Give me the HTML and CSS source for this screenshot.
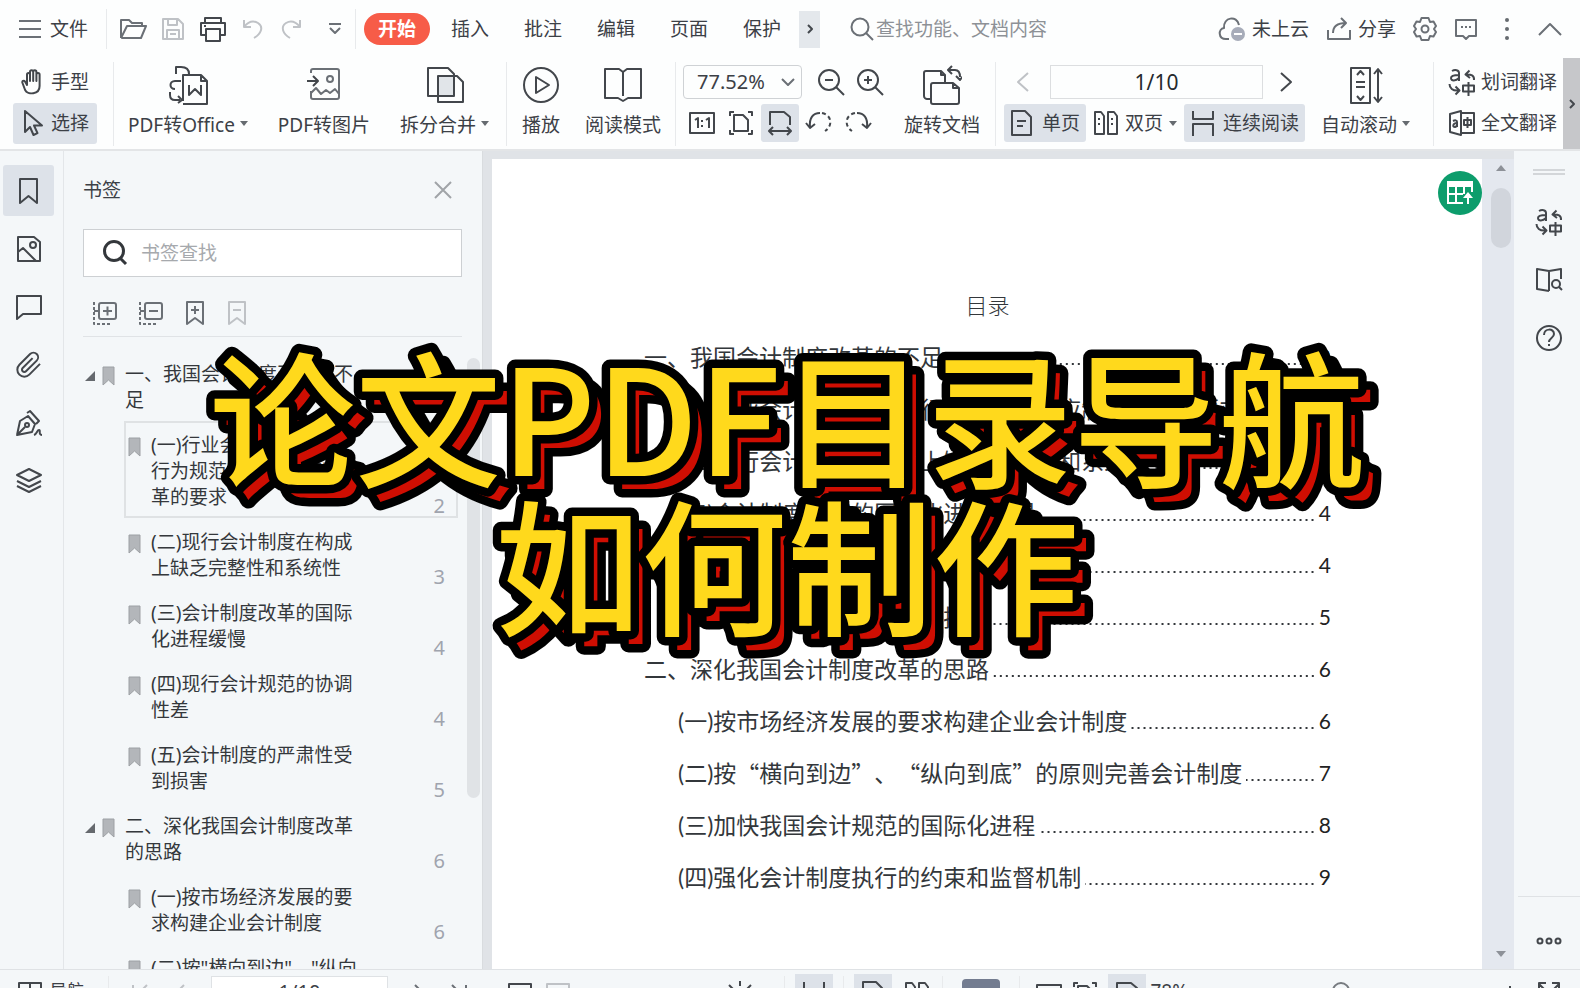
FILE: index.html
```html
<!DOCTYPE html>
<html lang="zh-CN">
<head>
<meta charset="utf-8">
<title>论文PDF目录导航如何制作</title>
<link rel="stylesheet" href="styles.css">
</head>
<body>
<svg class="sprite" aria-hidden="true">
  <symbol id="flag" viewBox="0 0 13 20"><path d="M1 1h11v18l-5.500-5L1 19z" fill="#b3b6ba" stroke="#9da0a4"/></symbol>
  <symbol id="caret" viewBox="0 0 8 5"><path d="M0 0h8L4 5z" fill="#666b70"/></symbol>
  <symbol id="translate" viewBox="0 0 28 28"><path d="M4 3c3-1.800 7-1 7 2V13M11 7C6 7 3 7.500 3 10c0 3.500 5 3 8 0M26 12c.5-4.500-3-6-8-5.500M21.500 2.500 17.500 6.500l4.500 3.500M1.500 16c0 4 3 7 9 6.500M7.500 18.500l4 4-4 4M15 17.500h11v6H15zM20.500 14V28"/></symbol>
  <symbol id="onepage" viewBox="0 0 24 28"><path d="M2 2h13l6 6v18H2zM7 12h9M7 17h6"/></symbol>
  <symbol id="twopage" viewBox="0 0 26 28"><path d="M2 3h6l3 4v18H2zM15 3h6l3 4v18h-9zM5 10h2M5 15h2M18 10h2M18 15h2"/></symbol>
  <symbol id="continuous" viewBox="0 0 26 28"><path d="M3 2v8h20V2M3 27V15h20v12"/></symbol>
  <symbol id="fitpage" viewBox="0 0 26 26"><path d="M2 6V2h4M20 2h4v4M24 20v4h-4M6 24H2v-4M6 5h9l5 5v11H6z"/></symbol>
  <symbol id="fitwidth" viewBox="0 0 26 26"><path d="M3 15V2h14l6 5v8M2 21h22M6 17l-4 4 4 4M20 17l4 4-4 4"/></symbol>
</svg>
<div class="app">
  <header>
    <div class="menubar">
      <button class="tool file"><svg class="ic" width="24" height="24" viewBox="0 0 24 24"><path d="M1 4h22M1 12h22M1 20h22"/></svg>文件</button>
      <span class="sep"></span>
      <div class="quick">
        <button aria-label="打开"><svg class="ic" width="28" height="24" viewBox="0 0 28 24"><path d="M2 21V3h8l3 3h10v4M2 21h20l5-12H8L2 21"/></svg></button>
        <button aria-label="保存"><svg class="ic faint" width="24" height="24" viewBox="0 0 24 24"><path d="M2 2h15l5 5v15H2zM7 2v6h9V2M6 22v-9h12v9M9 17h6"/></svg></button>
        <button aria-label="打印"><svg class="ic dark" width="28" height="28" viewBox="0 0 28 28"><path d="M6 8V3h16v5M7 20H2V8h24v12h-5M7 14h14v12H7zM5 11h2"/></svg></button>
        <button aria-label="撤销"><svg class="ic faint" width="24" height="24" viewBox="0 0 24 24"><path d="M3 3v7h7M3 10c4-5 9-7 14-4 6 4 3 11-4 15"/></svg></button>
        <button aria-label="重做"><svg class="ic faint" width="24" height="24" viewBox="0 0 24 24"><path d="M21 3v7h-7M21 10C17 5 12 3 7 6c-6 4-3 11 4 15"/></svg></button>
        <button aria-label="更多"><svg class="ic" width="16" height="16" viewBox="0 0 16 16"><path d="M2 3h12M3 7l5 5 5-5"/></svg></button>
      </div>
      <span class="sep"></span>
      <nav class="tabs">
        <a class="active" href="#start">开始</a><a href="#insert">插入</a><a href="#annotate">批注</a><a href="#edit">编辑</a><a href="#page">页面</a><a href="#protect">保护</a>
      </nav>
      <button class="more" aria-label="更多选项卡"><svg class="ic dark" width="8" height="10" viewBox="0 0 8 10"><path d="M2 1l4 4-4 4"/></svg></button>
      <label class="search"><svg class="ic" width="24" height="24" viewBox="0 0 24 24"><circle cx="10" cy="10" r="8.500"/><path d="M16 16l7 7"/></svg><input type="text" placeholder="查找功能、文档内容"></label>
      <div class="account">
        <button class="tool"><svg class="ic" width="28" height="26" viewBox="0 0 28 26"><path d="M11 23H8c-8 0-8-10-2-11C5 1 19-1 21 9"/><circle cx="20" cy="18" r="7" fill="#a7acb9" stroke="none"/><path d="M16 18h8" stroke="#fff"/></svg>未上云</button>
        <button class="tool"><svg class="ic" width="26" height="24" viewBox="0 0 26 24"><path d="M2 13v9h22v-9M7 16c0-6 4-10 13-10M15 1l5 5-5 5"/></svg>分享</button>
        <button aria-label="设置"><svg class="ic" width="24" height="26" viewBox="0 0 24 26"><path d="M8.500 2h7l1.500 4 3.500-.5L23 10l-2 3 2 3-2.500 4.500L17 20l-1.500 4h-7L7 20l-3.500.5L1 16l2-3-2-3 2.500-4.500L7 6z"/><circle cx="12" cy="13" r="3.500"/></svg></button>
        <button aria-label="反馈"><svg class="ic" width="24" height="24" viewBox="0 0 24 24"><path d="M2 3h20v16h-7l-3 3-3-3H2zM7 10h2M11 10h2M15 10h2"/></svg></button>
        <button aria-label="菜单"><svg width="24" height="24" viewBox="0 0 24 24" fill="#666b70"><circle cx="12" cy="3" r="2"/><circle cx="12" cy="12" r="2"/><circle cx="12" cy="21" r="2"/></svg></button>
        <button aria-label="收起功能区"><svg class="ic" width="24" height="14" viewBox="0 0 24 14"><path d="M1 13L12 2l11 11"/></svg></button>
      </div>
    </div>

    <div class="ribbon">
      <div class="group modes">
        <button class="tool"><svg class="ic dark" width="24" height="28" viewBox="0 0 24 28"><path d="M6 17V6.500c0-2 3-2 3 0V13 4c0-2.200 3.200-2.200 3.200 0v9V4c0-2.200 3.200-2.200 3.200 0v9V6.500c0-2 3.200-2 3.200 0V18c0 9-12 9-14.500 4L1.500 15c-1-2 1.500-3 2.500-1.500z"/></svg>手型</button>
        <button class="tool on"><svg class="ic dark" width="24" height="28" viewBox="0 0 24 28"><path d="M4 2v21l5-5 3.500 8 4-1.800L13 16.500h8z"/></svg>选择</button>
      </div>
      <span class="sep"></span>
      <div class="group convert">
        <button class="big"><svg class="ic dark" width="40" height="40" viewBox="0 0 40 40"><path d="M8 9V2h5c6 0 8 3 8 7M13 16H7c-6 0-6 8 0 8M2 27v3c0 4 2 5 5 5h5M10 31l4 4-4 3M15 36V10h18l6 6v23H15M33 10v6h6"/><path d="M21 20v10l6-6 6 6V20"/></svg><span>PDF转Office <svg class="caret"><use href="#caret"/></svg></span></button>
        <button class="big"><svg class="ic" width="40" height="40" viewBox="0 0 40 40"><path d="M7 8V6c0-1 1-2 2-2h24c1 0 2 1 2 2v26c0 1-1 2-2 2H9c-1 0-2-1-2-2v-6M7 28l5-5 5 6 5-4 4 3 5-4 4 5"/><path class="dark" d="M3 16h11M9 11l5 5-5 5"/><circle cx="26" cy="14" r="3"/></svg><span>PDF转图片</span></button>
        <button class="big"><svg class="ic dark" width="40" height="40" viewBox="0 0 40 40"><path d="M13 11h16v20H13z" fill="#e1e5e9" stroke="none"/><path d="M3 3h20l6 6v22H3zM13 11h19l6 6v20H13z"/></svg><span>拆分合并 <svg class="caret"><use href="#caret"/></svg></span></button>
      </div>
      <span class="sep"></span>
      <div class="group view">
        <button class="big"><svg class="ic dark" width="40" height="40" viewBox="0 0 40 40"><circle cx="20" cy="20" r="17"/><path d="M15 12v16l13-8z"/></svg><span>播放</span></button>
        <button class="big"><svg class="ic dark" width="40" height="40" viewBox="0 0 40 40"><path d="M2 4h14l4 3 4-3h14v29H25l-5 3-5-3H2zM20 7v24"/></svg><span>阅读模式</span></button>
      </div>
      <span class="sep"></span>
      <div class="group zoom">
        <div class="row">
          <div class="zoombox"><select aria-label="缩放比例"><option>77.52%</option></select><svg class="ic" width="14" height="8" viewBox="0 0 14 8"><path d="M1 1l6 6 6-6"/></svg></div>
          <button class="sq" aria-label="缩小"><svg class="ic dark" width="28" height="28" viewBox="0 0 28 28"><circle cx="12" cy="12" r="10"/><path d="M19 19l8 8M8 12h8"/></svg></button>
          <button class="sq" aria-label="放大"><svg class="ic dark" width="28" height="28" viewBox="0 0 28 28"><circle cx="12" cy="12" r="10"/><path d="M19 19l8 8M8 12h8M12 8v8"/></svg></button>
        </div>
        <div class="row">
          <button class="sq" aria-label="实际大小"><svg class="ic dark" width="26" height="26" viewBox="0 0 26 26"><path d="M1 3h24v20H1zM6 10l3-2v10M17 10l3-2v10M13 10v2M13 15v2"/></svg></button>
          <button class="sq" aria-label="适合页面"><svg class="ic dark" width="26" height="26"><use href="#fitpage"/></svg></button>
          <button class="sq on" aria-label="适合宽度"><svg class="ic dark" width="26" height="26"><use href="#fitwidth"/></svg></button>
          <button class="sq" aria-label="向左旋转"><svg class="ic dark" width="28" height="28" viewBox="0 0 28 28"><path d="M5 18C4 9 8 4 15 4M1 14l4 5 5-4"/><path stroke-dasharray="4 3" d="M17 4c10 2 11 13 3 18"/></svg></button>
          <button class="sq" aria-label="向右旋转"><svg class="ic dark" width="28" height="28" viewBox="0 0 28 28"><path d="M23 18c1-9-3-14-10-14M27 14l-4 5-5-4"/><path stroke-dasharray="4 3" d="M11 4C1 6 0 17 8 22"/></svg></button>
        </div>
      </div>
      <div class="group rotate">
        <button class="big"><svg class="ic dark" width="40" height="40" viewBox="0 0 40 40"><path d="M9 34H5c-1 0-3-1-3-3V8c0-1 1-2 2-2h15l4 4v8M19 6v4h4M9 20c0-1 1-2 2-2h20l6 5v14c0 1-1 2-2 2H11c-1 0-2-1-2-2zM31 18v5h6M27 5h6c3 0 5 2 5 7M30 1l-4 4 4 4M34 11l4 4 3-4"/></svg><span>旋转文档</span></button>
      </div>
      <span class="sep"></span>
      <div class="group pages">
        <div class="row">
          <button class="arrow" aria-label="上一页"><svg class="ic faint" width="14" height="22" viewBox="0 0 14 22"><path d="M12 2L2 11l10 9"/></svg></button>
          <input class="pageno" type="text" value="1/10" aria-label="页码">
          <button class="arrow" aria-label="下一页"><svg class="ic dark" width="14" height="22" viewBox="0 0 14 22"><path d="M2 2l10 9-10 9"/></svg></button>
        </div>
        <div class="row spread">
          <button class="tool on"><svg class="ic dark" width="24" height="28"><use href="#onepage"/></svg>单页</button>
          <button class="tool"><svg class="ic dark" width="26" height="28"><use href="#twopage"/></svg>双页 <svg class="caret"><use href="#caret"/></svg></button>
          <button class="tool on"><svg class="ic dark" width="26" height="28"><use href="#continuous"/></svg>连续阅读</button>
        </div>
      </div>
      <div class="group scroll">
        <button class="big"><svg class="ic dark" width="40" height="40" viewBox="0 0 40 40"><path d="M5 3h19v35H5zM11 10l3.500-4 3.500 4M10 17h9M10 22h9M11 31l3.500 4 3.500-4M32 4v33M28 9l4-5 4 5M28 32l4 5 4-5"/></svg><span>自动滚动 <svg class="caret"><use href="#caret"/></svg></span></button>
      </div>
      <span class="sep"></span>
      <div class="group translate">
        <button class="tool"><svg class="ic dark" width="28" height="28"><use href="#translate"/></svg>划词翻译</button>
        <button class="tool"><svg class="ic dark" width="28" height="28" viewBox="0 0 28 28"><path d="M2 5l11-3v24L2 23zM13 4h13v20H13M5 12c2-1 4-1 4 1v5M9 14c-4 0-5 4-2 4l2-1M16 11h7v5h-7zM19.500 8v11"/></svg>全文翻译</button>
      </div>
      <button class="edge" aria-label="更多工具"><svg class="ic dark" width="8" height="10" viewBox="0 0 8 10"><path d="M2 1l4 4-4 4"/></svg></button>
    </div>
  </header>

  <div class="body">
    <aside class="rail">
      <button class="on" aria-label="书签"><svg class="ic dark" width="28" height="28" viewBox="0 0 28 28"><path d="M5 2h17v24l-8.500-7L5 26z"/></svg></button>
      <button aria-label="缩略图"><svg class="ic dark" width="28" height="28" viewBox="0 0 28 28"><path d="M3 2h16l6 5v19H3zM3 17l5-4 13 13"/><circle cx="18" cy="10" r="3"/></svg></button>
      <button aria-label="批注"><svg class="ic dark" width="28" height="28" viewBox="0 0 28 28"><path d="M2 3h24v18H8l-6 5z"/></svg></button>
      <button aria-label="附件"><svg class="ic dark clip" width="28" height="28" viewBox="0 0 24 24"><path d="M21.440 11.050l-9.190 9.190a6 6 0 0 1-8.490-8.490l9.190-9.190a4 4 0 0 1 5.660 5.660l-9.200 9.190a2 2 0 0 1-2.830-2.830l8.490-8.480"/></svg></button>
      <button aria-label="签名"><svg class="ic dark" width="28" height="28" viewBox="0 0 28 28"><path d="M2 26 5 12l8-5 7 8-3 8-15 3 8-8M12 4l3-2 9 10-3 3M19 26c3-1 3-5 5-5s-1 5 3 5"/><circle cx="12" cy="16" r="2"/></svg></button>
      <button aria-label="图层"><svg class="ic dark" width="28" height="28" viewBox="0 0 28 28"><path d="M14 2l12 6-12 6L2 8zM2 14l12 6 12-6M2 19l12 6 12-6"/></svg></button>
    </aside>

    <section class="panel">
      <div class="panel-head"><h2>书签</h2><button aria-label="关闭"><svg class="ic pale" width="18" height="18" viewBox="0 0 18 18"><path d="M1 1l16 16M17 1L1 17"/></svg></button></div>
      <label class="find"><svg class="ic bold" width="26" height="26" viewBox="0 0 26 26"><circle cx="12" cy="11" r="9.500"/><path d="M18 18l6 6"/></svg><input type="text" placeholder="书签查找"></label>
      <div class="panel-tools">
        <button aria-label="展开"><svg class="ic" width="24" height="24" viewBox="0 0 24 24"><rect x="6" y="2" width="17" height="16" rx="2"/><path d="M10 10h9M14.500 5.500v9M1 10h5"/><path stroke-dasharray="3 2" d="M1 1v22h17"/></svg></button>
        <button aria-label="收起"><svg class="ic" width="24" height="24" viewBox="0 0 24 24"><rect x="6" y="2" width="17" height="16" rx="2"/><path d="M10 10h9M1 10h5"/><path stroke-dasharray="3 2" d="M1 1v22h17"/></svg></button>
        <button aria-label="添加书签"><svg class="ic" width="20" height="24" viewBox="0 0 20 24"><path d="M2 1h16v22l-8-6-8 6zM6 9h8M10 5v8"/></svg></button>
        <button aria-label="删除书签"><svg class="ic faint" width="20" height="24" viewBox="0 0 20 24"><path d="M2 1h16v22l-8-6-8 6zM6 9h8"/></svg></button>
      </div>
      <div class="tree-wrap">
        <ul class="tree">
          <li><i class="fold"></i><svg class="flag"><use href="#flag"/></svg><p>一、我国会计制度改革的不<br>足</p></li>
          <li class="sub picked"><svg class="flag"><use href="#flag"/></svg><p>(一)行业会计制度与会计<br>行为规范不适应制度改<br>革的要求</p><span>2</span></li>
          <li class="sub"><svg class="flag"><use href="#flag"/></svg><p>(二)现行会计制度在构成<br>上缺乏完整性和系统性</p><span>3</span></li>
          <li class="sub"><svg class="flag"><use href="#flag"/></svg><p>(三)会计制度改革的国际<br>化进程缓慢</p><span>4</span></li>
          <li class="sub"><svg class="flag"><use href="#flag"/></svg><p>(四)现行会计规范的协调<br>性差</p><span>4</span></li>
          <li class="sub"><svg class="flag"><use href="#flag"/></svg><p>(五)会计制度的严肃性受<br>到损害</p><span>5</span></li>
          <li><i class="fold"></i><svg class="flag"><use href="#flag"/></svg><p>二、深化我国会计制度改革<br>的思路</p><span>6</span></li>
          <li class="sub"><svg class="flag"><use href="#flag"/></svg><p>(一)按市场经济发展的要<br>求构建企业会计制度</p><span>6</span></li>
          <li class="sub"><svg class="flag"><use href="#flag"/></svg><p>(二)按"横向到边"、"纵向</p></li>
        </ul>
        <div class="tree-bar"></div>
      </div>
    </section>

    <main class="viewer">
      <article class="sheet">
        <button class="badge" aria-label="导出表格"><svg width="26" height="24" viewBox="0 0 26 24" fill="none" stroke="#fff" stroke-width="2"><path d="M1 1h24v4H1z" fill="#fff"/><path d="M1 5v17h15M1 13h15M9 5v17M17 5v8M25 5v6M21 23v-8"/><path d="M21 11l5 6H16z" fill="#fff" stroke="none"/></svg></button>
        <h1>目录</h1>
        <ol class="toc">
          <li>一、我国会计制度改革的不足<i></i><b>2</b></li>
          <li class="sub">(一)行业会计制度与会计行为规范不适应制度改革的要求<i></i><b>2</b></li>
          <li class="sub">(二)现行会计制度在构成上缺乏完整性和系统性<i></i><b>3</b></li>
          <li class="sub">(三)会计制度改革的国际化进程缓慢<i></i><b>4</b></li>
          <li class="sub">(四)现行会计规范的协调性差<i></i><b>4</b></li>
          <li class="sub">(五)会计制度的严肃性受到损害<i></i><b>5</b></li>
          <li>二、深化我国会计制度改革的思路<i></i><b>6</b></li>
          <li class="sub">(一)按市场经济发展的要求构建企业会计制度<i></i><b>6</b></li>
          <li class="sub">(二)按<q>“</q>横向到边<q>”</q>、<q>“</q>纵向到底<q>”</q>的原则完善会计制度<i></i><b>7</b></li>
          <li class="sub">(三)加快我国会计规范的国际化进程<i></i><b>8</b></li>
          <li class="sub">(四)强化会计制度执行的约束和监督机制<i></i><b>9</b></li>
        </ol>
      </article>
      <div class="vbar"><i class="up"></i><i class="thumb"></i><i class="down"></i></div>
    </main>

    <aside class="dock">
      <i class="grip"></i>
      <button aria-label="划词翻译"><svg class="ic dark" width="28" height="28"><use href="#translate"/></svg></button>
      <button aria-label="查词"><svg class="ic dark" width="28" height="28" viewBox="0 0 28 28"><path d="M14 5 2 3v20l12 2M14 5l12-2v10M14 5v20"/><circle cx="21" cy="18" r="4"/><path d="M24 21l3 3"/></svg></button>
      <button aria-label="帮助"><svg class="ic dark" width="28" height="28" viewBox="0 0 28 28"><circle cx="14" cy="14" r="12"/><path d="M9 11c0-7 10-7 10-1 0 4-5 4-5 8M14 20v2"/></svg></button>
      <button class="last" aria-label="更多"><svg class="ic dark" width="28" height="10" viewBox="0 0 28 10"><circle cx="5" cy="5" r="2.500"/><circle cx="14" cy="5" r="2.500"/><circle cx="23" cy="5" r="2.500"/></svg></button>
    </aside>
  </div>

  <footer class="status">
    <div class="status-row">
      <button class="tool nav"><svg class="ic dark" width="24" height="24" viewBox="0 0 24 24"><path d="M1 1h22v21H1zM12 1v21"/></svg>导航</button>
      <span class="sep"></span>
      <div class="pager">
        <svg class="ic faint" width="18" height="24" viewBox="0 0 18 24"><path d="M2 3v18M16 3l-9 9 9 9"/></svg>
        <svg class="ic faint" width="12" height="24" viewBox="0 0 12 24"><path d="M10 3l-9 9 9 9"/></svg>
        <input type="text" value="1/10" aria-label="当前页">
        <svg class="ic" width="12" height="24" viewBox="0 0 12 24"><path d="M2 3l9 9-9 9"/></svg>
        <svg class="ic" width="18" height="24" viewBox="0 0 18 24"><path d="M2 3l9 9-9 9M16 3v18"/></svg>
      </div>
      <div class="views">
        <svg class="ic dark" width="24" height="24" viewBox="0 0 24 24"><path d="M1 2h22v20H1z"/></svg>
        <svg class="ic faint" width="24" height="24" viewBox="0 0 24 24"><path d="M1 2h22v20H1z"/></svg>
      </div>
      <div class="display">
        <svg class="ic dark sun" width="28" height="28" viewBox="0 0 28 28"><circle cx="14" cy="15" r="6"/><path d="M14 1v5M3 5l4 4M25 5l-4 4"/></svg>
        <span class="sep"></span>
        <button class="sq on" aria-label="连续"><svg class="ic dark" width="26" height="28"><use href="#continuous"/></svg></button>
        <span class="sep"></span>
        <button class="sq on" aria-label="单页"><svg class="ic dark" width="24" height="28"><use href="#onepage"/></svg></button>
        <svg class="ic dark" width="30" height="28"><use href="#twopage"/></svg>
        <span class="sep"></span>
        <button class="play" aria-label="播放"></button>
        <span class="sep"></span>
      </div>
      <div class="scale">
        <svg class="ic dark" width="26" height="24" viewBox="0 0 26 24"><path d="M1 3h24v18H1z"/></svg>
        <svg class="ic dark" width="26" height="26"><use href="#fitpage"/></svg>
        <button class="sq on" aria-label="适合宽度"><svg class="ic dark" width="26" height="26"><use href="#fitwidth"/></svg></button>
        <span>78%</span>
      </div>
      <i class="knob"></i>
      <svg class="ic dark plus" width="16" height="24" viewBox="0 0 16 24"><path d="M8 4v16M0 12h16"/></svg>
      <svg class="ic dark" width="26" height="26" viewBox="0 0 26 26"><path d="M9 9 3 3M3 9V2h7M17 9l6-6M23 9V2h-7M9 17l-6 6M17 17l6 6"/></svg>
    </div>
  </footer>

  <svg class="caption" role="img" aria-label="论文PDF目录导航 如何制作">
    <use class="shade" href="#caption-text" x="12" y="13"/>
    <g class="face">
      <text id="caption-text"><tspan x="50%" y="132">论文PDF目录导航</tspan><tspan x="50%" y="280">如何制作</tspan></text>
    </g>
  </svg>
</div>
</body>
</html>
```
FILE: styles.css
```css
* { box-sizing: border-box; }
body {
  margin: 0;
  font-family: "Noto Sans", "Noto Sans CJK SC", sans-serif;
  font-size: 19px;
  line-height: 26px;
  color: #3c4046;
  background: #fdfefe;
}
h1, h2, p, ul, ol { margin: 0; padding: 0; font-weight: 400; }
ul, ol { list-style: none; }
button, input, select { font: inherit; color: inherit; border: 0; background: none; padding: 0; margin: 0; }
button { display: flex; align-items: center; justify-content: center; white-space: nowrap; }
input { outline: 0; min-width: 0; }
a { color: inherit; text-decoration: none; }
svg { flex: none; display: block; }
.sprite { position: absolute; width: 0; height: 0; }

.ic { fill: none; stroke: #6b7076; stroke-width: 2; stroke-linejoin: round; }
.ic.dark, .dark { stroke: #43474c; }
.ic.faint { stroke: #bfc2c6; }
.ic.pale { stroke: #a0a4a8; }
.ic.bold { stroke: #33373b; stroke-width: 3; }
.caret { display: inline-block; width: 8px; height: 5px; vertical-align: 6px; }

.app { position: relative; height: 100vh; display: flex; flex-direction: column; overflow: hidden; }

/* menu bar */
.menubar { display: flex; align-items: center; height: 58px; padding: 0 18px; }
.tool { gap: 8px; }
.file { margin-right: 18px; }
.sep { width: 1px; height: 40px; background: #e8eaec; flex: none; }
.quick { display: flex; align-items: center; gap: 14px; padding: 0 12px; flex: none; }
.quick button:last-child { margin-left: 10px; }
.tabs { display: flex; align-items: center; gap: 35px; margin-left: 8px; white-space: nowrap; }
.tabs .active { padding: 3px 14px; border-radius: 16px; background: #f75c48; color: #fff; font-weight: 700; margin-right: -14px; }
.more { width: 21px; height: 37px; background: #e4e8ec; margin-left: 18px; }
.search { display: flex; align-items: center; gap: 2px; margin-left: 30px; color: #85898e; flex: 1; min-width: 0; }
.search input { flex: 1; }
input::placeholder { color: #8d9196; opacity: 1; }
.account { display: flex; align-items: center; gap: 17px; }
.account .tool { gap: 6px; }
.account button:last-child { margin-left: 2px; }

/* ribbon */
.ribbon { display: flex; align-items: center; height: 93px; padding-left: 13px; border-bottom: 2px solid #e3e5e7; }
.ribbon .sep { height: 84px; }
.group { display: flex; flex: none; height: 82px; margin-bottom: 2px; }
.on { background: #dde2e9; border-radius: 3px; }
.modes { flex-direction: column; width: 84px; margin-right: 16px; }
.modes .tool { height: 41px; gap: 6px; }
.big { flex-direction: column; justify-content: space-between; height: 82px; padding: 3px 0 6px; }
.convert { gap: 30px; padding: 0 17px 0 14px; }
.view { gap: 24px; padding: 0 14px; }
.zoom, .pages, .translate { flex-direction: column; }
.row { display: flex; align-items: center; height: 41px; gap: 1px; }
.zoom { margin-left: 7px; }
.sq { width: 38px; height: 38px; flex: none; }
.zoombox { display: flex; align-items: center; width: 119px; height: 34px; border: 1px solid #cfd2d5; border-radius: 4px; margin-right: 9px; padding-right: 6px; }
.zoombox select { flex: 1; appearance: none; padding-left: 13px; font-size: 20px; }
.rotate { padding: 0 15px; }
.pages { flex: 1; min-width: 0; padding: 0 8px; }
.arrow { width: 38px; height: 34px; flex: none; }
.pageno { flex: 1; width: 0; height: 34px; border: 1px solid #dcdee0; text-align: center; font-size: 21px; color: #26292d; margin: 0 3px 0 7px; }
.spread { justify-content: space-between; }
.spread .tool { height: 38px; padding: 0 6px; }
.spread .tool:not(.on) { gap: 6px; padding: 0; }
.spread .tool:last-child { gap: 7px; }
.scroll { padding: 0 23px 0 8px; }
.translate { padding: 0 6px 0 14px; }
.translate .tool { height: 41px; gap: 5px; }
.edge { width: 17px; height: 91px; background: #c6c7ca; flex: none; }

/* work area */
.body { flex: 1; display: flex; min-height: 0; background: #f4f7f9; }
.rail { width: 64px; border-right: 1px solid #e3e6e9; padding: 14px 0 0 3px; display: flex; flex-direction: column; gap: 7px; }
.rail button { width: 51px; height: 51px; }
.clip { stroke-width: 1.7; }

.panel { width: 419px; padding: 0 2px 0 19px; display: flex; flex-direction: column; border-right: 1px solid #d9dcdf; }
.panel-head { display: flex; justify-content: space-between; align-items: center; height: 78px; padding-right: 28px; }
h2 { font-size: 19px; }
.find { display: flex; align-items: center; gap: 13px; height: 48px; margin-right: 18px; padding-left: 18px; background: #fff; border: 1px solid #cdd0d3; flex: none; }
.find input { flex: 1; }
.find input::placeholder { color: #a6a9ad; }
.panel-tools { display: flex; align-items: center; gap: 22px; height: 60px; margin-right: 18px; padding: 12px 0 0 10px; border-bottom: 1px solid #e0e3e6; flex: none; }
.tree-wrap { flex: 1; min-height: 0; display: flex; justify-content: space-between; padding-top: 13px; overflow: hidden; }
.tree { width: 375px; color: #34383c; }
.tree li { display: flex; margin-left: 2px; padding: 11px 13px 8px 0; }
.tree p { flex: 1; white-space: nowrap; }
.tree span { align-self: flex-end; color: #a0a4ae; font-size: 20px; line-height: 20px; margin-bottom: -6px; }
.tree .flag { width: 13px; height: 20px; margin: 5px 10px 0 7px; }
.tree .sub { margin-left: 41px; padding-left: 4px; }
.tree .sub .flag { margin-left: 0; }
.tree .picked { box-shadow: inset 0 0 0 2px #dfe2e4; }
.fold { width: 0; height: 0; border-left: 10px solid transparent; border-bottom: 10px solid #65696e; margin-top: 10px; }
.tree-bar { width: 13px; height: 440px; margin-top: 8px; border-radius: 7px; background: #e0e3e6; }

.viewer { flex: 1; min-width: 0; display: flex; background: #e0e3e7; padding: 8px 0 0 9px; }
.sheet { position: relative; flex: 1; min-width: 0; background: #fff; padding: 134px 151px 0 152px; font-family: "Lato", "Noto Sans CJK SC", sans-serif; font-size: 23px; color: #33373b; font-weight: 300; }
.sheet h1 { font-size: 22px; font-weight: 300; text-align: center; line-height: 26px; margin-bottom: 12px; }
.toc li { display: flex; align-items: center; height: 52px; white-space: nowrap; }
.toc .sub { padding-left: 34px; }
.toc i { flex: 1; height: 2px; margin: 14px 3px 0 4px; background: radial-gradient(circle, #33373b 1px, transparent 1px) right center / 6px 2px repeat-x; }
.toc b { font-weight: 400; font-size: 21px; color: #222; }
.toc q { quotes: none; font-family: "Noto Sans CJK SC", sans-serif; }
.badge { position: absolute; top: 12px; right: 0; width: 44px; height: 44px; border-radius: 50%; background: #0d9d6c; }
.vbar { width: 32px; display: flex; flex-direction: column; align-items: center; padding: 6px 0 12px 6px; background: #e4e8ef; }
.up { border: 5px solid transparent; border-top: 0; border-bottom: 6px solid #8d9198; }
.down { border: 5px solid transparent; border-bottom: 0; border-top: 6px solid #8d9198; margin-top: auto; }
.thumb { width: 20px; height: 60px; border-radius: 10px; background: #d1d5dc; margin-top: 17px; }

.dock { width: 66px; display: flex; flex-direction: column; align-items: center; padding: 18px 0 0 4px; }
.grip { width: 32px; height: 6px; border: solid #d3d6d9; border-width: 2px 0; margin-bottom: 33px; }
.dock button { height: 28px; margin-bottom: 30px; }
.dock .last { align-self: stretch; height: 88px; border-top: 1px solid #dfe2e5; margin: auto 0 -15px; }

/* status bar */
.status { height: 19px; border-top: 1px solid #dfe2e5; background: #f4f7f9; overflow: hidden; }
.status-row { display: flex; align-items: center; height: 42px; padding: 0 18px; font-size: 17px; }
.status-row .sep { height: 30px; }
.status-row svg { margin-top: 6px; }
.nav { gap: 8px; margin-right: 24px; }
.pager { display: flex; align-items: center; gap: 25px; padding-left: 22px; }
.pager input { width: 177px; height: 30px; border: 1px solid #dfe2e5; background: #fff; text-align: center; font-size: 20px; }
.views { display: flex; gap: 14px; margin-left: 40px; }
.display { display: flex; align-items: center; gap: 10px; margin-left: auto; }
.sun { margin-right: 20px; }
.status .on { height: 34px; border-radius: 0; }
.play { width: 38px; height: 24px; border-radius: 4px; background: #737c90; margin: 0 9px; }
.scale { display: flex; align-items: center; gap: 10px; margin: 0 144px 0 16px; }
.scale .on { margin-right: -6px; }
.scale span { font-size: 19px; }
.knob { width: 18px; height: 18px; border: 2px solid #777b80; border-radius: 50%; margin-right: 152px; }
.plus { margin-right: 18px; }

/* caption laid over the window */
.caption { position: absolute; left: 0; top: 344px; width: calc(100% - 6px); height: 330px; overflow: visible; pointer-events: none; font-family: "Noto Sans CJK SC", sans-serif; font-size: 146px; font-weight: 500; text-anchor: middle; }
.face, .shade { stroke: #000; stroke-width: 17px; stroke-linejoin: round; paint-order: stroke fill; }
.face { fill: #ffd91c; }
.shade { fill: #cf0e02; }
```
